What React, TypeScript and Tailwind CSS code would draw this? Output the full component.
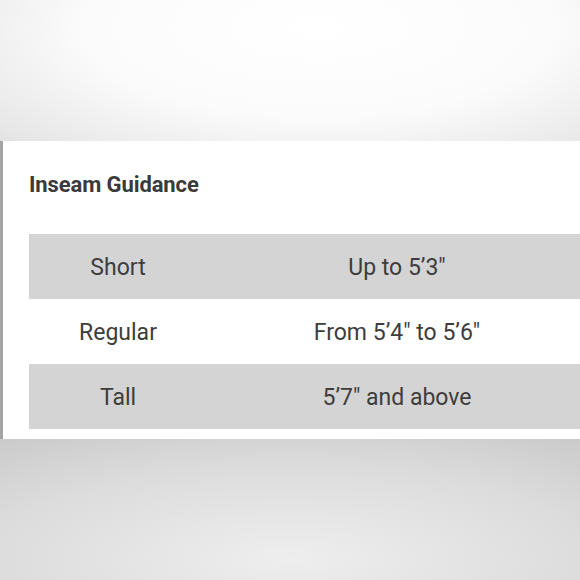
const rows = [
  { size: "Short", height: "Up to 5’3\"" },
  { size: "Regular", height: "From 5’4\" to 5’6\"" },
  { size: "Tall", height: "5’7\" and above" },
];

export default function App() {
  return (
    <div className="flex h-[580px] w-[580px] flex-col overflow-hidden font-['Roboto',_'Liberation_Sans',_sans-serif] text-[#3d3d3d]">
      {/* top backdrop */}
      <div className="h-[141px] shrink-0 bg-[radial-gradient(ellipse_90%_140%_at_55%_20%,#ffffff_0%,#fbfbfb_45%,#e6e6e6_80%,#c9c9c9_100%)]" />

      {/* white card */}
      <div className="h-[298px] shrink-0 overflow-hidden border-l-[3px] border-[#a4a4a4] bg-white pl-[26px] pt-[30px]">
        <h2 className="text-[22px] leading-[28px] font-bold tracking-[-0.1px] text-[#3a3a3a]">Inseam Guidance</h2>

        <div className="mt-[35px] grid w-[558px] grid-cols-[178px_1fr]">
          {rows.map((r, i) => (
            <div key={r.size} className={`col-span-2 grid h-[65px] grid-cols-subgrid items-center pt-[4px] text-[23px] ${i % 2 === 0 ? "bg-[#d4d4d4]" : "bg-white"}`}>
              <span className="text-center">{r.size}</span>
              <span className="text-center">{r.height}</span>
            </div>
          ))}
        </div>
      </div>

      {/* bottom backdrop */}
      <div className="flex-1 bg-[radial-gradient(ellipse_95%_120%_at_50%_85%,#eeeeee_0%,#dcdcdc_55%,#c4c4c4_100%)]" />
    </div>
  );
}
